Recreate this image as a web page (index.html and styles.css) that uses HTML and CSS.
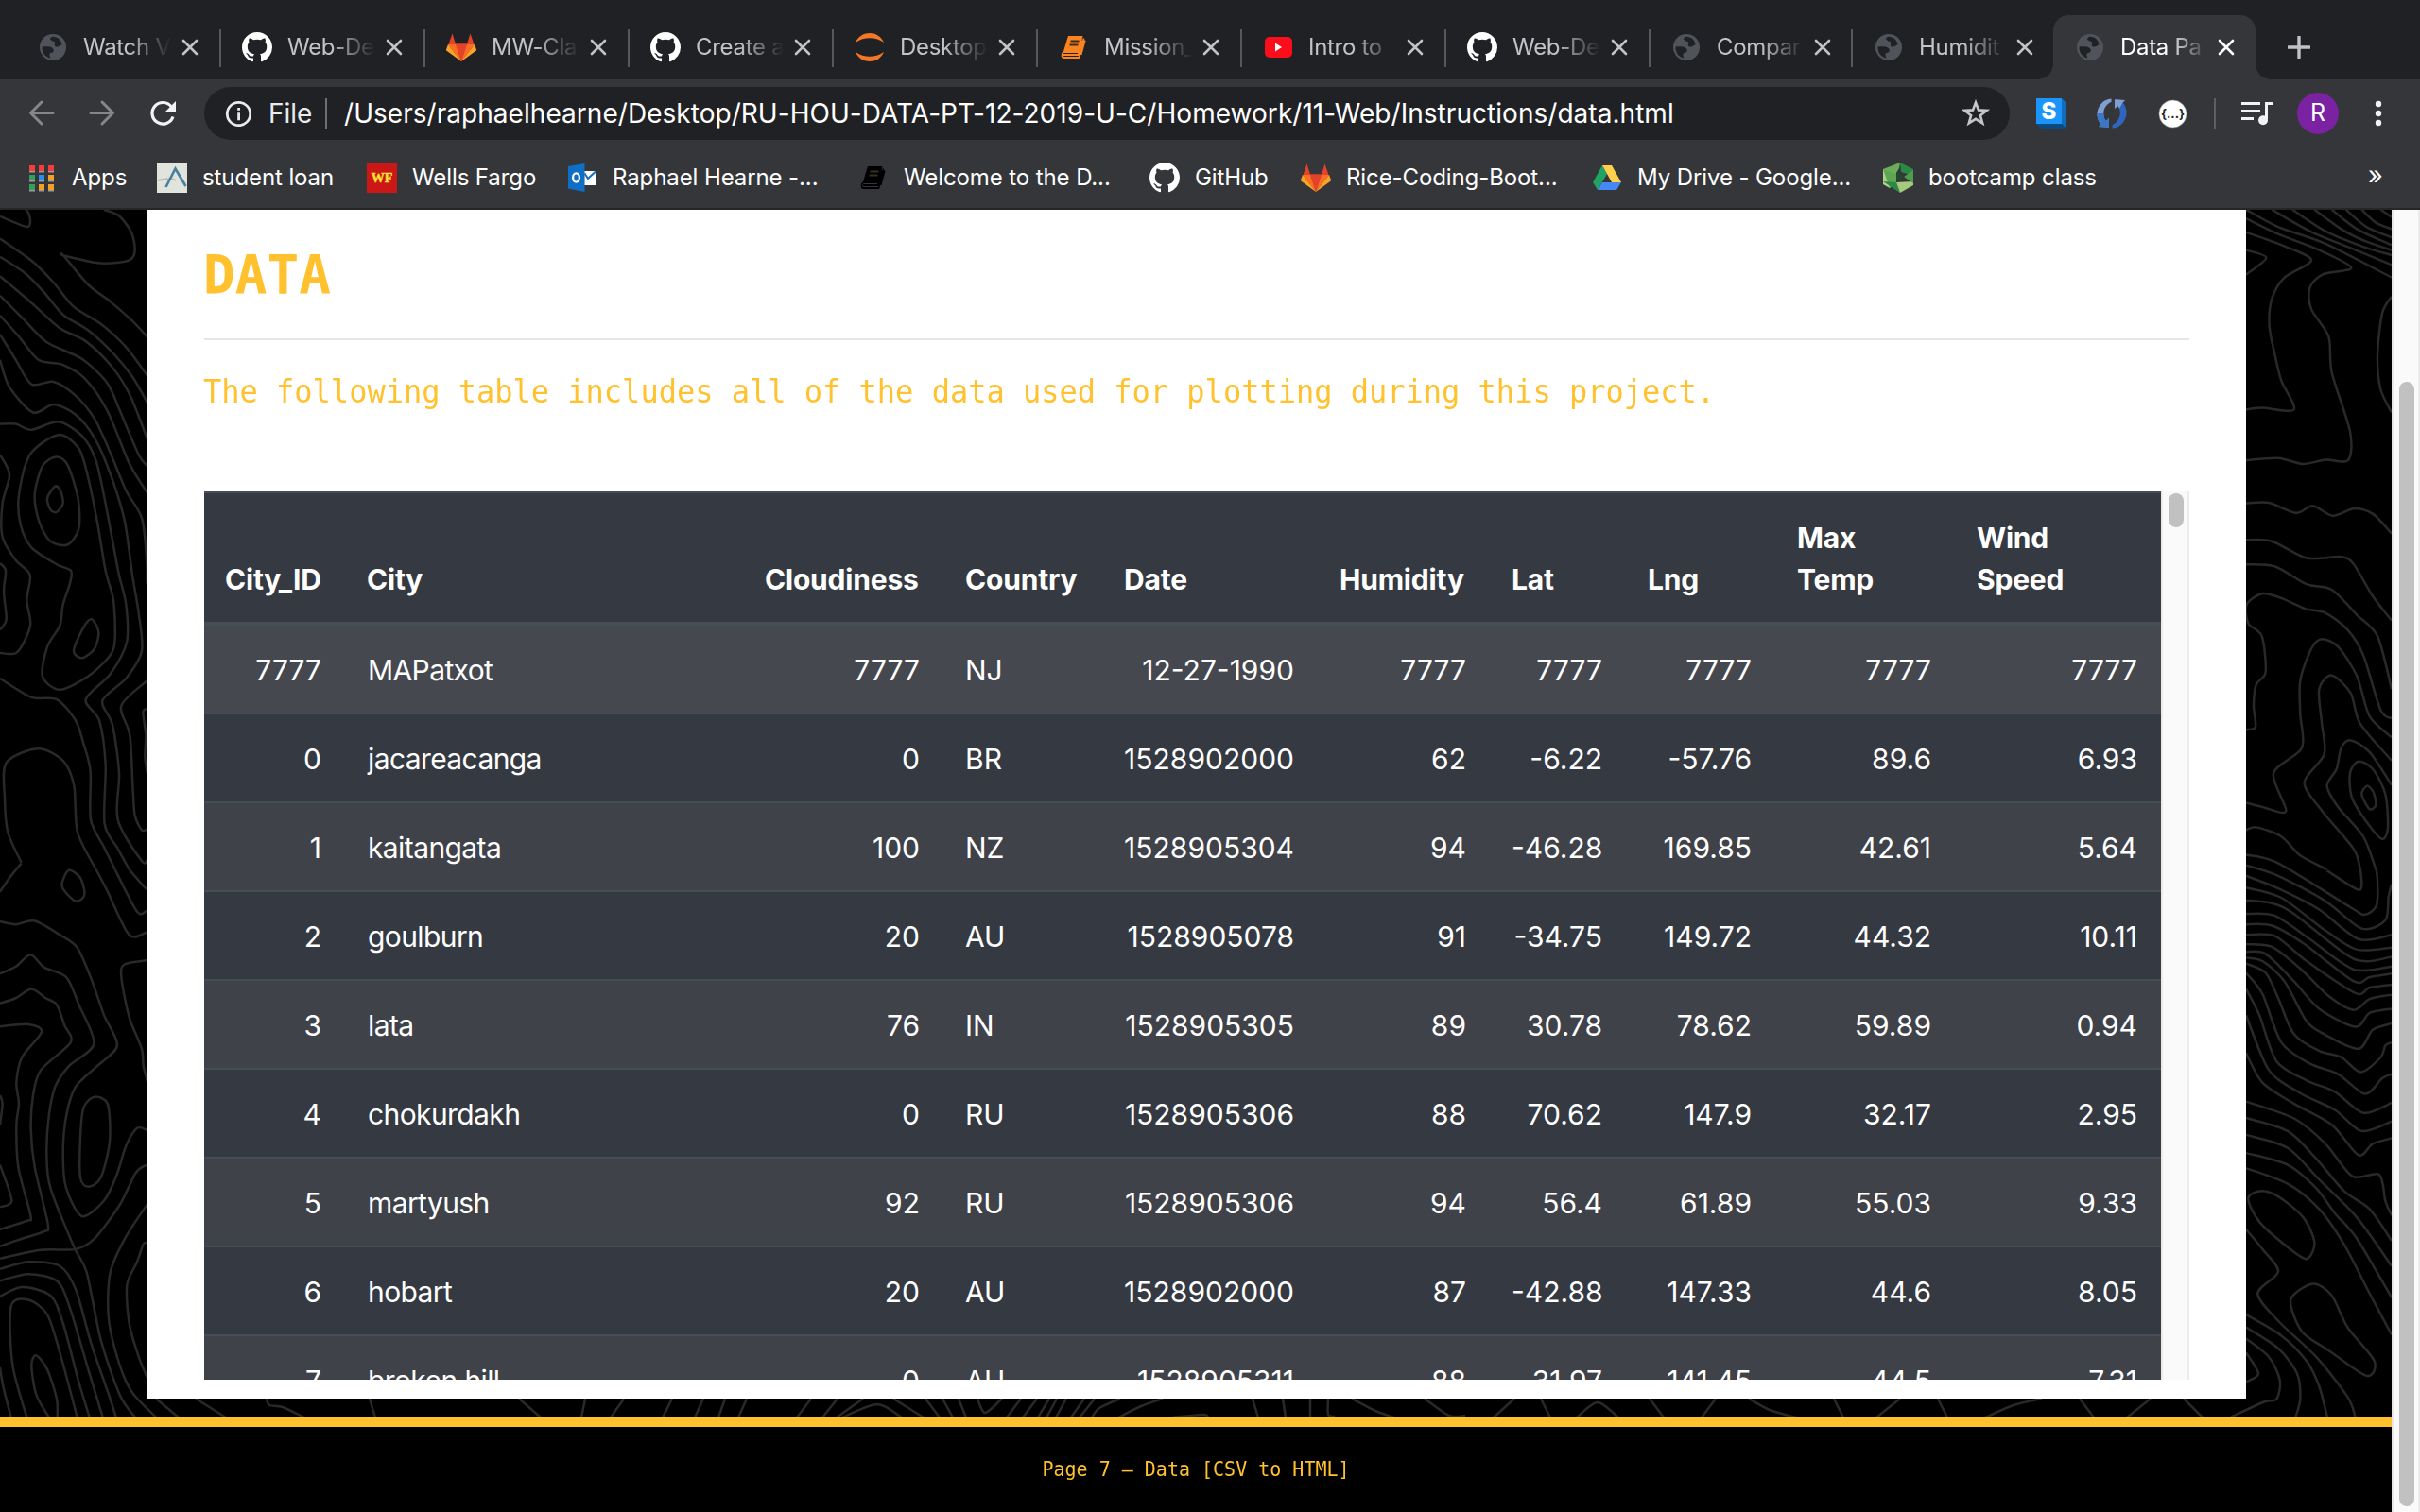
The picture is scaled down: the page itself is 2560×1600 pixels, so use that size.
FILE: index.html
```html
<!DOCTYPE html>
<html lang="en">
<head>
<meta charset="utf-8">
<title>Data Page</title>
<link rel="stylesheet" href="styles.css">
</head>
<body>
<svg class="defs" width="0" height="0">
  <defs>
    <symbol id="globe" viewBox="0 0 32 32"><circle cx="16" cy="16" r="14" fill="#50545a"/><path class="land" d="M14.500 5.200c-1.300 1-2 2.600-.9 3.600 1.200 1 3.400.4 4.200 1.400.9 1.300-.6 2.400.2 4.200.9 1.800 3.800 1.200 5 .4 1-.9 1.600-1.400 2.600-1.600C25 9.500 22.500 5.500 16.500 4.800c-.8 0-1.400 0-2 .4z"/><path class="land" d="M4.500 15.500c2.500-.3 6.500-.5 9 .2 2.300.7 3.600 2.300 3.200 4.200-.4 1.700-2.300 1.700-3.500 2.300-1.500.8-.7 3 .3 5.300C8 26.500 4.300 22 4.500 15.500z"/><path fill="#50545a" d="M14 5c-2 1.500-1.500 3.500 1 3.800l-3 3.200-3-.5z"/></symbol>
    <symbol id="github" viewBox="0 0 16 16"><path fill="#fff" d="M8 0C3.58 0 0 3.58 0 8c0 3.54 2.290 6.530 5.470 7.590.4.070.55-.17.55-.38 0-.19-.01-.82-.01-1.490-2.010.37-2.530-.49-2.690-.94-.09-.23-.48-.94-.82-1.130-.28-.15-.68-.52-.01-.53.63-.01 1.080.58 1.230.82.72 1.210 1.870.87 2.330.66.070-.52.28-.87.51-1.070-1.780-.2-3.640-.89-3.640-3.950 0-.87.31-1.590.82-2.150-.08-.2-.36-1.020.08-2.120 0 0 .67-.21 2.200.82.64-.18 1.320-.27 2-.27s1.360.09 2 .27c1.530-1.040 2.200-.82 2.200-.82.44 1.100.16 1.920.08 2.120.51.56.82 1.270.82 2.150 0 3.070-1.870 3.750-3.650 3.950.29.25.54.73.54 1.480 0 1.070-.01 1.930-.01 2.200 0 .21.15.46.55.38A8.010 8.010 0 0 0 16 8c0-4.420-3.580-8-8-8Z"/></symbol>
    <symbol id="gitlab" viewBox="0 0 32 32"><path fill="#e24329" d="M6.500 1.500 10 12.500h12L25.500 1.500 29.500 13 16 31 2.500 13z"/><path fill="#fc6d26" d="M2 13h8l6 18zM30 13h-8l-6 18z"/><path fill="#e24329" d="M10 12.500h12L16 31z"/><path fill="#fca326" d="M2 13 0 18.500c-.1.500 0 1 .5 1.300L16 31zM30 13l2 5.500c.1.500 0 1-.5 1.300L16 31z"/></symbol>
    <symbol id="book" viewBox="0 0 32 32"><path fill="currentColor" d="M10 4h15.500l-4 18H4.500z"/><path fill="none" stroke="currentColor" stroke-width="1.800" d="M5.500 21c-2.500 1-3 6 .5 6h15.500L26.500 6.500M5 24h15.500L25 9M27.800 8.500 23.500 24"/><path class="bookline" stroke-width="1.800" d="M12.500 9.500h9M11.500 13.500h9"/></symbol>
    <symbol id="close" viewBox="0 0 18 18"><path d="M2 2l14 14M16 2 2 16" stroke="currentColor" stroke-width="2.600" stroke-linecap="round"/></symbol>
  </defs>
</svg>

<header class="browser">
  <nav class="tabs">
    <div class="tab"><svg class="icon"><use href="#globe"/></svg><span class="title">Watch V</span><svg class="close"><use href="#close"/></svg></div>
    <div class="tab"><svg class="icon"><use href="#github"/></svg><span class="title">Web-De</span><svg class="close"><use href="#close"/></svg></div>
    <div class="tab"><svg class="icon"><use href="#gitlab"/></svg><span class="title">MW-Cla</span><svg class="close"><use href="#close"/></svg></div>
    <div class="tab"><svg class="icon"><use href="#github"/></svg><span class="title">Create a</span><svg class="close"><use href="#close"/></svg></div>
    <div class="tab"><svg class="icon" viewBox="0 0 32 32"><path fill="#f37726" d="M1 11C4 4 10 1 16 1s12 3 15 10C26 7.500 21 6.300 16 6.300S6 7.500 1 11zM1 21c3 7 9 10 15 10s12-3 15-10c-5 3.500-10 4.700-15 4.700S6 24.500 1 21z"/></svg><span class="title">Desktop</span><svg class="close"><use href="#close"/></svg></div>
    <div class="tab"><svg class="icon orange"><use href="#book"/></svg><span class="title">Mission_</span><svg class="close"><use href="#close"/></svg></div>
    <div class="tab"><svg class="icon" viewBox="0 0 32 32"><rect x="2" y="5" width="29" height="22" rx="5" fill="#fc0d1b"/><path fill="#fff" d="M13 11.500v9l7-4.500z"/></svg><span class="title">Intro to</span><svg class="close"><use href="#close"/></svg></div>
    <div class="tab"><svg class="icon"><use href="#github"/></svg><span class="title">Web-De</span><svg class="close"><use href="#close"/></svg></div>
    <div class="tab narrow"><svg class="icon"><use href="#globe"/></svg><span class="title">Compar</span><svg class="close"><use href="#close"/></svg></div>
    <div class="tab narrow last"><svg class="icon"><use href="#globe"/></svg><span class="title">Humidit</span><svg class="close"><use href="#close"/></svg></div>
    <div class="tab narrow active"><svg class="icon"><use href="#globe"/></svg><span class="title">Data Pa</span><svg class="close"><use href="#close"/></svg></div>
    <svg class="newtab" viewBox="0 0 24 24"><path d="M12 1v22M1 12h22" stroke="#bfc2c7" stroke-width="3.400" stroke-linecap="round"/></svg>
  </nav>

  <div class="toolbar">
    <svg class="nav" viewBox="0 0 32 32"><path d="M28 15.500H5M16 4 4.500 15.500 16 27" fill="none" stroke="#85868a" stroke-width="3" stroke-linecap="round" stroke-linejoin="round"/></svg>
    <svg class="nav" viewBox="0 0 32 32"><path d="M4 15.500h23M16 4l11.500 11.500L16 27" fill="none" stroke="#85868a" stroke-width="3" stroke-linecap="round" stroke-linejoin="round"/></svg>
    <svg class="nav" viewBox="0 0 32 32"><path d="M25.500 9.200A11.300 11.300 0 1 0 27 19.500" fill="none" stroke="#f1f3f4" stroke-width="3.200"/><path fill="#f1f3f4" d="M30 3v12H18z"/></svg>
    <div class="omnibox">
      <svg class="icon" viewBox="0 0 32 32"><circle cx="16.500" cy="16.500" r="12.200" fill="none" stroke="#e8eaed" stroke-width="2.800"/><path d="M15.200 10h2.800v2.800h-2.800zM15.200 15.200h2.800v8h-2.800z" fill="#e8eaed"/></svg>
      <span class="scheme">File</span>
      <span class="bar"></span>
      <span class="url">/Users/raphaelhearne/Desktop/RU-HOU-DATA-PT-12-2019-U-C/Homework/11-Web/Instructions/data.html</span>
      <svg class="icon star" viewBox="0 0 32 32"><path d="M16 4.500 19 12.400l8.700.5-6.800 5.300 2.300 8.200L16 21.800l-7.200 4.600 2.300-8.200-6.800-5.300 8.700-.5z" fill="none" stroke="#c4c6c9" stroke-width="2.600"/></svg>
    </div>
    <svg class="ext" viewBox="0 0 32 32"><path fill="#0b4a80" d="M0 27h27l5 5H5z"/><path fill="#0f6dbb" d="M27 0l5 5v27l-5-5z"/><path fill="#1b95fb" d="M0 0h27v27H0z"/><text x="13.500" y="22" text-anchor="middle" class="s">S</text></svg>
    <svg class="ext" viewBox="0 0 32 32"><path fill="#7f9fd0" d="M15.500.5C6 .5-1 11 .7 19.500c.6 3.500 2 6 3.800 8L2 30l11 .8V21l-3.200 3C5 18 7 7.500 15.500 3.800z"/><path fill="#3b76c9" d="M.5 16c.2 5.500 1.800 9 4 11.500L2 30l11 .8V21l-3.200 3C8.200 22 7.200 19 7.200 16z"/><path fill="#2f66bd" d="M16.500 31.500C26 31.500 33 21 31.300 12.500c-.6-3.500-2-6-3.800-8L30 2l-11-.8V11l3.200-3C27 14 25 24.500 16.500 28.200z"/><path fill="#7f9fd0" d="M27.500 4.500 30 2l-11-.8V11l3.200-3 2 2.500z"/></svg>
    <svg class="ext" viewBox="0 0 32 32"><circle cx="16.500" cy="16.500" r="14.600" fill="#fff" stroke="#777" stroke-width=".6"/><text x="16.500" y="21" text-anchor="middle" class="j">{...}</text></svg>
    <span class="bar ext-bar"></span>
    <svg class="ext media" viewBox="0 0 34 32"><path d="M0 5.500h20M0 13.500h20M0 21.500h13" stroke="#f1f3f4" stroke-width="3"/><path d="M33 5.500h-6.500V22" fill="none" stroke="#f1f3f4" stroke-width="3"/><circle cx="23" cy="23.300" r="5" fill="#f1f3f4"/></svg>
    <span class="avatar">R</span>
    <svg class="dots" viewBox="0 0 32 32"><g fill="#f1f3f4"><circle cx="16" cy="6" r="3.200"/><circle cx="16" cy="16" r="3.200"/><circle cx="16" cy="26" r="3.200"/></g></svg>
  </div>

  <nav class="bookmarks">
    <a><svg class="icon" viewBox="0 0 32 32"><path fill="#9b9b9b" d="M3 9h6v1.500H3zM13 9h6v1.500h-6zM23 9h6v1.500h-6zM3 19h6v1.500H3zM13 19h6v1.500h-6zM23 19h6v1.500h-6zM3 29h6v1.500H3zM13 29h6v1.500h-6zM23 29h6v1.500h-6z"/><path fill="#fb3b3b" d="M3 3h6v6H3zM13 3h6v6h-6zM23 3h6v6h-6z"/><path fill="#34a05a" d="M3 13h6v6H3zM3 23h6v6H3z"/><path fill="#2490f5" d="M13 13h6v6h-6z"/><path fill="#f3a125" d="M23 13h6v6h-6zM13 23h6v6h-6zM23 23h6v6h-6z"/></svg><span>Apps</span></a>
    <a><svg class="icon" viewBox="0 0 32 32"><path fill="#e1e3dd" d="M0 0h32v32H0z"/><path d="M1 19c8-2 15-3 19 0" stroke="#b9bab2" stroke-width="2" fill="none"/><path d="M9.500 26 19.500 6.500 30.500 25" stroke="#4a809f" stroke-width="2.600" fill="none"/></svg><span>student loan</span></a>
    <a><svg class="icon" viewBox="0 0 32 32"><path fill="#cc1719" d="M0 0h32v32H0z"/><text x="16" y="21" text-anchor="middle" class="wf">WF</text></svg><span>Wells Fargo</span></a>
    <a><svg class="icon" viewBox="0 0 32 32"><path fill="#0f6fc6" d="M1 4 18.500 1v30L1 27.500z"/><path fill="#fff" d="M18.500 9H30v15H18.500z"/><path d="M18.500 11.500 22 17l8-7.500" stroke="#0f6fc6" stroke-width="2" fill="none"/><ellipse cx="9.500" cy="16" rx="3.400" ry="4.600" fill="none" stroke="#fff" stroke-width="2.300"/></svg><span>Raphael Hearne -...</span></a>
    <a><svg class="icon black"><use href="#book"/></svg><span>Welcome to the D...</span></a>
    <a><svg class="icon"><use href="#github"/></svg><span>GitHub</span></a>
    <a><svg class="icon"><use href="#gitlab"/></svg><span>Rice-Coding-Boot...</span></a>
    <a><svg class="icon" viewBox="0 0 32 32"><path fill="#1fa463" d="M11 3 1 21l5 8L16 12z"/><path fill="#ffd04b" d="M11 3h10l10 18H21z"/><path fill="#4688f4" d="M11 21h20l-5 8H6z"/></svg><span>My Drive - Google...</span></a>
    <a><svg class="icon" viewBox="0 0 32 32"><path fill="#2a8a45" d="M18 0 32 7v7l-13-4z"/><path fill="#69ad58" d="M18 0 0 7l1 5 13-1 3-5z"/><path fill="#b3cf8c" d="M0 7v16l7 4 7-6V11z"/><path fill="#5fa653" d="M0 7l14 4v10l-7 6z"/><path fill="#2a8a45" d="M0 20l14 1 4 11z"/><path fill="#a5c97d" d="M32 20 14 21l4 11 14-8z"/><path fill="#4f9c4d" d="M32 8v14l-10-7z"/><path fill="#28462f" d="M14 10l9 5-9 6z"/></svg><span>bootcamp class</span></a>
    <span class="more">»</span>
  </nav>
</header>

<div class="viewport">
  <div class="page">
    <svg class="topo" id="topo" viewBox="0 0 2530 1278"></svg>
    <main class="card">
      <h1>DATA</h1>
      <hr>
      <p>The following table includes all of the data used for plotting during this project.</p>
      <div class="scroller">
        <table>
          <colgroup><col class="w148"><col class="w421"><col class="w212"><col class="w168"><col class="w228"><col class="w182"><col class="w144"><col class="w158"><col class="w190"><col class="w219"></colgroup>
          <thead><tr><th>City_ID</th><th>City</th><th>Cloudiness</th><th>Country</th><th>Date</th><th>Humidity</th><th>Lat</th><th>Lng</th><th>Max<br>Temp</th><th>Wind<br>Speed</th></tr></thead>
          <tbody>
            <tr class="hover"><td>7777</td><td>MAPatxot</td><td>7777</td><td>NJ</td><td>12-27-1990</td><td>7777</td><td>7777</td><td>7777</td><td>7777</td><td>7777</td></tr>
            <tr><td>0</td><td>jacareacanga</td><td>0</td><td>BR</td><td>1528902000</td><td>62</td><td>-6.22</td><td>-57.76</td><td>89.6</td><td>6.93</td></tr>
            <tr><td>1</td><td>kaitangata</td><td>100</td><td>NZ</td><td>1528905304</td><td>94</td><td>-46.28</td><td>169.85</td><td>42.61</td><td>5.64</td></tr>
            <tr><td>2</td><td>goulburn</td><td>20</td><td>AU</td><td>1528905078</td><td>91</td><td>-34.75</td><td>149.72</td><td>44.32</td><td>10.11</td></tr>
            <tr><td>3</td><td>lata</td><td>76</td><td>IN</td><td>1528905305</td><td>89</td><td>30.78</td><td>78.62</td><td>59.89</td><td>0.94</td></tr>
            <tr><td>4</td><td>chokurdakh</td><td>0</td><td>RU</td><td>1528905306</td><td>88</td><td>70.62</td><td>147.9</td><td>32.17</td><td>2.95</td></tr>
            <tr><td>5</td><td>martyush</td><td>92</td><td>RU</td><td>1528905306</td><td>94</td><td>56.4</td><td>61.89</td><td>55.03</td><td>9.33</td></tr>
            <tr><td>6</td><td>hobart</td><td>20</td><td>AU</td><td>1528902000</td><td>87</td><td>-42.88</td><td>147.33</td><td>44.6</td><td>8.05</td></tr>
            <tr><td>7</td><td>broken hill</td><td>0</td><td>AU</td><td>1528905311</td><td>88</td><td>-31.97</td><td>141.45</td><td>44.5</td><td>7.31</td></tr>
          </tbody>
        </table>
        <div class="track inner"><div class="thumb"></div></div>
      </div>
    </main>
    <footer><span>Page 7 – Data [CSV to HTML]</span></footer>
  </div>
  <div class="track outer"><div class="thumb"></div></div>
</div>
<script src="contours.js"></script>
</body>
</html>
```
FILE: styles.css
```css
* { box-sizing: border-box; }
body { margin: 0; width: 2560px; height: 1600px; overflow: hidden; background: #000; font-family: Inter, "Liberation Sans", sans-serif; }
.defs { position: absolute; }

/* Browser chrome */
.browser { height: 222px; background: #35363a; border-bottom: 2px solid #262629; }
.tabs { display: flex; height: 84px; padding: 16px 0 0 17px; background: #202124; color: #c0c3c7; }
.tab { display: flex; align-items: center; width: 216px; height: 68px; padding-left: 23px; position: relative; }
.tab.narrow { width: 214px; }
.tab.narrow.last { width: 213px; }
.tab::after { content: ""; position: absolute; right: -1px; top: 15px; width: 2px; height: 40px; background: #56585c; }
.tab.last::after { display: none; }
.tab .title { width: 98px; flex: none; margin: -1px 7px 0 16px; font-size: 24px; line-height: 30px; letter-spacing: -.3px; white-space: nowrap; -webkit-mask-image: linear-gradient(90deg, #000 48%, transparent 95%); mask-image: linear-gradient(90deg, #000 48%, transparent 95%); }
.tab .close { width: 18px; height: 18px; margin-left: -1px; }
.tab.narrow .close { margin-left: -2px; }
.tab.active { background: #35363a; border-radius: 16px 16px 0 0; color: #fff; }
.tab.active::before { content: ""; position: absolute; left: -16px; bottom: 0; width: 16px; height: 16px; background: radial-gradient(circle at 0 0, transparent 15.5px, #35363a 16px); }
.tab.active::after { right: -16px; top: auto; bottom: 0; width: 16px; height: 16px; background: radial-gradient(circle at 100% 0, transparent 15.5px, #35363a 16px); }
.icon { width: 32px; height: 32px; flex: none; }
.land { fill: #202124; }
.orange { color: #fb8320; }
.black { color: #000; }
.bookline { stroke: #38301f; }
.newtab { width: 24px; height: 24px; margin: 22px 0 0 34px; }

.toolbar { display: flex; align-items: center; height: 72px; padding-left: 28px; }
.nav { width: 32px; height: 32px; margin-right: 32px; flex: none; }
.nav:nth-child(3) { margin-right: 28px; }
.omnibox { display: flex; align-items: center; width: 1910px; height: 56px; padding: 0 20px; margin-right: 28px; border-radius: 28px; background: #202124; font-size: 28px; line-height: 34px; flex: none; }
.scheme { width: 60px; padding-left: 16px; color: #e8eaed; flex: none; white-space: nowrap; }
.bar { width: 2px; height: 32px; margin: 0 18px 0 16px; background: #6d6f74; flex: none; }
.url { color: #fff; white-space: nowrap; letter-spacing: .04px; }
.star { margin-left: auto; }
.ext { width: 32px; height: 32px; margin-right: 32px; flex: none; }
.s { font: 800 24px Inter, sans-serif; fill: #fff; }
.j { font: 700 13px Inter, sans-serif; fill: #222; }
.wf { font: 700 14px "Liberation Serif", serif; fill: #fde432; stroke: #fde432; stroke-width: .4; }
.ext-bar { margin: 0 27px 0 -4px; background: #5c5e62; }
.media { width: 34px; margin-right: 25px; }
.avatar { width: 44px; height: 44px; border-radius: 50%; background: #7b22a2; color: #fff; font-size: 25px; line-height: 43px; text-align: center; flex: none; }
.dots { width: 32px; height: 32px; margin-left: 26px; flex: none; }

.bookmarks { display: grid; grid-template-columns: 138px 222px 212px 308px 308px 160px 308px 308px 464px 1fr; align-items: center; height: 64px; padding: 0 0 0 28px; color: #fff; font-size: 24px; letter-spacing: -.1px; line-height: 30px; }
.bookmarks a { display: flex; align-items: center; gap: 16px; white-space: nowrap; }
.bookmarks a span { margin-top: -1px; }
.bookmarks .black .bookline { stroke: #444; }
.more { margin: -4px 0 0 49px; font-size: 27px; }

/* Page viewport */
.viewport { display: flex; height: 1378px; }
.page { position: relative; width: 2530px; background: #000; }
.topo { position: absolute; left: 0; top: 0; width: 2530px; height: 1278px; }
.topo path { fill: none; stroke: #292929; stroke-width: 2.500; stroke-linejoin: round; vector-effect: non-scaling-stroke; }
.card { position: relative; width: 2220px; height: 1258px; margin: 0 0 20px 156px; padding: 36px 60px 0; background: #fff; }
h1, p, footer { font-family: "DejaVu Sans Mono", monospace; color: #ffc22e; }
h1 { margin: 0 0 32px -1px; font-size: 56px; line-height: 68px; transform: scaleY(1.03); transform-origin: 0 79%; }
hr { height: 2px; margin: 0; border: 0; background: #e5e5e5; }
p { margin: 31px 0 81px -1px; font-size: 32px; line-height: 48px; white-space: nowrap; transform: scaleY(1.04); transform-origin: 0 73%; }
.scroller { display: flex; height: 940px; overflow: hidden; }

table { width: 2070px; flex: none; table-layout: fixed; border-collapse: separate; border-spacing: 0; background: #353941; color: #fff; font-size: 30px; line-height: 44px; align-self: flex-start; }
.w148 { width: 148px; } .w421 { width: 421px; } .w212 { width: 212px; } .w168 { width: 168px; } .w228 { width: 228px; }
.w182 { width: 182px; } .w144 { width: 144px; } .w158 { width: 158px; } .w190 { width: 190px; } .w219 { width: 219px; }
th { height: 140px; padding: 0 24px 23px; border-top: 2px solid #454d55; border-bottom: 2px solid #454d55; text-align: left; vertical-align: bottom; font-weight: 700; letter-spacing: -.2px; white-space: nowrap; }
th:first-child { padding-left: 22px; }
td { height: 94px; padding: 2px 24px 0; border-top: 2px solid #454d55; text-align: right; vertical-align: middle; white-space: nowrap; }
td:nth-child(2), td:nth-child(4) { text-align: left; }
td:nth-child(2) { padding-left: 25px; letter-spacing: -.6px; }
td:last-child { padding-right: 25px; }
tbody tr:nth-child(odd) { background: #3f4249; }
tbody tr.hover { background: #45484f; }

.track { background: #fafafa; }
.track .thumb { background: #c1c1c1; border-radius: 8px; width: 16px; }
.inner { width: 30px; padding: 2px 0 0 6px; border-left: 2px solid #ebebeb; border-right: 2px solid #ebebeb; }
.inner .thumb { height: 36px; }
.outer { width: 30px; padding: 182px 0 0 6px; border-left: 2px solid #e8e8e8; border-right: 2px solid #ebebeb; }
.outer .thumb { height: 1190px; }

footer { position: relative; height: 100px; padding-top: 30px; border-top: 10px solid #ffc22e; background: #000; font-size: 20px; line-height: 30px; text-align: center; }
footer span { display: inline-block; transform: scaleY(1.04); transform-origin: 0 73%; }
```
FILE: contours.js
```js
// Topographic lines behind the card. A leading "c" marks a closed loop.
const groups = [
  ["translate(0 -2) scale(.33333 .44643)", `
0,20 80,44 95,38 92,15 82,4
330,4 380,20 418,60 428,100 415,122 370,130 305,130 202,113 202,113 280,182 350,222 420,268 468,306
0,73 100,125 170,177 235,235 320,275 400,330 468,398
0,116 80,155 140,200 200,253 280,290 360,345 420,400 468,462
0,162 100,225 190,285 270,315 350,372 410,440 468,548
0,208 70,260 148,318 260,358 340,415 380,480 440,585 468,612
0,255 60,305 122,360 200,372 270,405 340,480 410,605 468,676
0,300 50,360 100,418 170,412 240,445 300,500 350,580 400,670 450,735 465,830 467,890
0,360 30,425 105,485 170,466 240,490 300,545 350,630 395,740 420,870 440,960 450,1050 400,1115 325,1168 357,1225 378,1340 374,1450 450,1548 468,1545
0,512 50,512 100,526 185,507 260,540 305,600 340,720 375,860 400,940 402,1030 350,1105 272,1165 315,1215 335,1320 332,1460 375,1520 410,1568
c 185,538 95,585 60,680 65,750 100,805 180,845 225,860 222,890 200,940 190,990 150,1040 135,1110 190,1142 280,1110 350,1060 365,1020 360,930 335,860 310,750 280,640 250,570
c 178,590 135,612 110,680 125,745 160,790 215,798 250,760 248,690 215,610
c 175,660 150,688 160,715 180,721 200,700 192,670
c 290,975 262,998 234,1050 260,1067 300,1045 313,1005
0,585 30,632 8,700 8,780 50,835 95,870 85,930 96,990 55,1053 0,1055
0,842 18,860 12,910 20,975 0,1000
0,1115 100,1160 180,1165 240,1215 265,1270 287,1335 288,1450 330,1515 365,1568
68,1552 25,1480 15,1400 20,1315 120,1282 200,1310 235,1370 246,1480 305,1568
468,1120 385,1180 412,1250 422,1380 428,1440 450,1475 468,1472
468,1187 454,1195 463,1250 460,1300 468,1340`],
  ["translate(0 678) scale(.33333 .44643)", `
68,30 30,65 0,98
305,45 340,95 410,200 468,193
365,45 435,145 468,142
410,45 460,88 468,88
c 218,47 197,85 240,120 268,105 255,65
0,168 50,175 110,167 190,200 245,230 290,305 330,390 372,462 310,510 240,560 210,630 200,720 210,800 260,867 330,830 370,770 400,700 435,658 468,663
0,292 50,275 97,247 140,277 210,300 250,365 298,458 220,510 175,560 155,630 148,720 160,800 235,940 275,1000 320,1160 380,1290 428,1343
0,362 50,350 100,328 145,350 180,365 205,415 224,455 130,520 105,580 98,660 110,750 152,885 140,903 70,920 0,938
0,417 90,412 132,430 70,490 52,550 60,600 52,650 58,750 97,865 85,878 0,898
0,745 37,830 0,845
0,580 8,600 0,650
468,260 395,270 385,300 410,395 450,470 455,510 468,548
c 300,584 265,610 255,680 255,775 280,797 320,775 348,690 342,602
0,967 130,947 240,945 300,920 380,840 430,765 460,747 468,748
468,838 400,915 350,1000 345,1110 380,1220 420,1285 495,1343
468,930 455,933 435,975 403,1030 410,1120 440,1200 468,1250
0,992 90,975 190,985 240,1040 290,1170 350,1300 368,1343
0,1020 90,1004 180,1020 220,1080 280,1230 326,1343
0,1057 70,1035 160,1055 200,1120 250,1260 284,1343
85,1343 40,1220 35,1080 90,1065 150,1100 190,1190 245,1343
155,1343 115,1290 100,1220 115,1197 150,1230 180,1300 182,1343
0,1225 10,1270 35,1343`],
  ["translate(2360 -2) scale(.33333 .44643)", `
48,4 150,45 300,85 510,165
130,4 250,55 380,95 510,135
195,4 300,55 420,92 510,112
265,4 350,50 430,80 510,100
320,4 400,50 510,88
365,4 430,45 510,70
415,4 460,35 510,50
475,4 510,22
48,58 150,85 255,123 170,165 130,215 122,280 140,350 160,410 200,478 100,474 48,478
48,100 112,118 48,158
48,25 150,62 280,100 382,142 290,158 250,190 255,240 310,305 320,390 378,530 372,598 300,597 228,607 150,593 48,598
510,210 480,250 465,350 475,430 510,485
48,700 120,699 207,723 260,706 323,730 390,713 450,725 510,772
48,787 130,790 240,830 350,827 390,845 450,920 510,978
48,845 140,850 240,892 320,905 400,965 465,1015 510,1140
48,1237 78,1230 72,1180 80,1130 110,1100 98,1015 55,985 50,940 100,914 160,925 235,950 300,960 370,1000 420,1060 475,1190 510,1210
510,1255 440,1205 400,1110 340,1040 288,1022 255,1045 220,1120 220,1200 225,1280 135,1340 175,1430 100,1420 48,1410
510,1310 410,1222 380,1150 320,1108 280,1140 288,1220 296,1295 233,1362 290,1430 390,1520 410,1568
510,1368 440,1290 380,1262 350,1280 335,1330 305,1370 340,1420 420,1490 460,1568
c 405,1312 378,1340 385,1400 440,1465 480,1496 498,1470 490,1390 450,1330
c 432,1370 415,1390 440,1425 460,1415 452,1385
48,1475 80,1468 160,1490 220,1535 305,1568`],
  ["translate(2360 678) scale(.33333 .44643)", `
305,48 400,92 415,80 410,40
460,40 465,70 462,130 425,152 380,135 150,30 48,10
48,35 150,60 300,120 415,185 490,165 500,110 510,80
48,60 150,90 280,140 405,210 510,200
48,88 160,112 300,190 400,235 510,230
48,118 130,125 200,150 390,257 510,252
48,150 140,155 250,210 390,282 510,275
48,175 130,178 230,220 390,310 440,300 510,292
48,200 140,203 240,262 395,338 440,325 510,318
48,222 130,228 220,280 310,345 390,378 440,352 510,342
48,240 110,245 200,310 280,375 395,418 440,385 510,375
48,254 100,262 170,310 240,405 300,437 405,470 450,425 510,410
48,268 110,290 150,350 200,435 280,475 350,490 412,525 475,490 490,462 510,455
48,290 100,340 160,455 250,505 340,530 425,577 480,540 510,530
48,328 90,390 145,500 240,545 330,572 420,622 510,598
48,390 120,520 220,575 330,615 415,665 510,642
48,480 100,550 200,600 320,650 405,722 450,695 510,682
48,595 200,635 300,695 385,772 470,768 490,830 510,865
48,634 180,665 270,730 360,808 440,850 510,925
48,674 180,705 280,780 400,870 510,985
48,717 180,745 270,800 330,860 400,920 510,1060
48,753 180,790 280,850 360,935 440,1050 510,1148
c 95,807 55,825 90,880 180,940 240,968 265,930 230,870 150,820
48,898 100,945 150,998 85,1050 150,1115 270,1200 370,1295 395,1343
c 260,1027 190,1065 225,1140 310,1185 430,1245 455,1210 370,1130 320,1055
48,1100 160,1150 240,1210 280,1270 306,1343
48,1130 150,1180 210,1240 220,1300 205,1343
48,1157 120,1200 155,1255 145,1300 105,1307 0,1343
48,1190 87,1240 48,1260`],
  ["translate(0 -222)", `
165,1480 189,1500
207,1480 239,1500
282,1480 285,1487 299,1489 322,1500
391,1480 397,1500
549,1480 572,1500
619,1480 615,1500
660,1480 646,1500
711,1480 701,1500
744,1480 735,1500
767,1480 760,1500
790,1480 781,1500
858,1480 843,1500
886,1480 870,1500
885,1500 913,1480
891,1500 928,1486 954,1500
945,1480 977,1500
979,1480 994,1500
997,1480 1008,1500
1014,1480 1022,1500
1034,1480 1042,1495 1060,1480
1080,1480 1065,1500
1097,1480 1082,1500
1110,1480 1098,1500
1118,1480 1107,1500
1128,1480 1117,1500
1147,1480 1133,1500
1158,1480 1142,1500
1185,1480 1163,1490 1155,1500
1230,1480 1207,1488 1183,1500
1240,1500 1273,1497 1278,1500
1325,1480 1331,1500
1357,1480 1360,1500
1386,1480 1386,1500
1405,1480 1405,1497 1412,1499
1430,1480 1455,1493 1475,1500
1507,1480 1533,1498 1550,1498
1580,1500 1602,1480
1630,1480 1640,1500
1668,1500 1690,1484 1712,1500
1745,1480 1760,1500
1800,1500 1815,1480
1850,1480 1872,1492 1900,1500
1940,1480 1950,1500
1985,1500 2010,1480
2050,1480 2060,1500
2100,1500 2130,1487 2160,1480
2200,1480 2215,1500
2250,1500 2275,1480
2310,1480 2330,1500`]
];

const NS = "http://www.w3.org/2000/svg";
const svg = document.getElementById("topo");

// Catmull-Rom spline through the points, softened to keep the corners crisp.
function spline(pts, closed) {
  const n = pts.length, k = 7;
  const at = i => closed ? pts[(i + n) % n] : pts[Math.max(0, Math.min(n - 1, i))];
  let d = "M" + pts[0];
  for (let i = 0; i < (closed ? n : n - 1); i++) {
    const [a, b, c, e] = [at(i - 1), at(i), at(i + 1), at(i + 2)];
    d += `C${b[0] + (c[0] - a[0]) / k},${b[1] + (c[1] - a[1]) / k} ${c[0] - (e[0] - b[0]) / k},${c[1] - (e[1] - b[1]) / k} ${c}`;
  }
  return d;
}

for (const [transform, lines] of groups) {
  const g = document.createElementNS(NS, "g");
  g.setAttribute("transform", transform);
  for (const line of lines.trim().split("\n")) {
    const closed = line[0] === "c";
    const pts = line.replace("c ", "").split(" ").map(p => p.split(",").map(Number));
    const path = document.createElementNS(NS, "path");
    path.setAttribute("d", spline(pts, closed));
    g.append(path);
  }
  svg.append(g);
}
```
